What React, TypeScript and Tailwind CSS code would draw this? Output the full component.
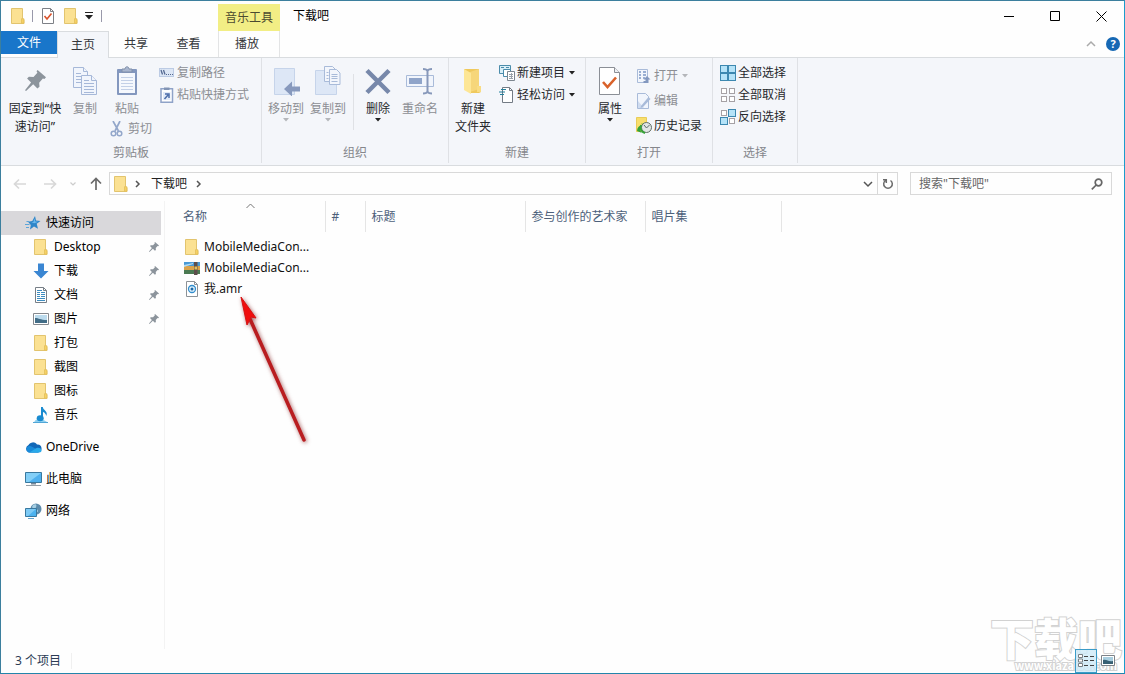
import React from "react";
import type { ReactNode } from "react";

/* ---------- icons ---------- */

function FolderIcon() {
  return (
    <svg width="16" height="16" viewBox="0 0 16 16" className="shrink-0">
      <path d="M1.5.5h11v11h1.500v4h-12.500z" fill="#f8dd84" stroke="#e2c46e" />
      <path d="M2 1h10v10L11 15H2z" fill="#fbe192" />
      <path d="M11.500 15.200v-4.500h2.300v4.500z" fill="#f7d263" stroke="#e2bf5c" strokeWidth="0.800" />
    </svg>
  );
}

function BigFolderIcon() {
  return (
    <svg width="20" height="30" viewBox="0 0 20 30">
      <path d="M1 3h15v18h2v5l-2 1H7z" fill="#efc95d" />
      <path d="M7 6l9-3v20l-9 3z" fill="#f6d67a" />
      <path d="M1 3l7 4v21l-7-4z" fill="#fde695" />
      <path d="M14 20h4v6h-4z" fill="#f9dc83" />
    </svg>
  );
}

function CheckDocIcon({ big = false }: { big?: boolean }) {
  return big ? (
    <svg width="24" height="30" viewBox="0 0 24 30">
      <path d="M1.500 1.500h15l5 5v22h-20z" fill="#fff" stroke="#8b8f96" />
      <path d="M16.500 1.500v5h5" fill="#eef0f3" stroke="#8b8f96" />
      <path d="M5 16l4.500 5L18 11.500" fill="none" stroke="#d9622b" strokeWidth="2.600" />
    </svg>
  ) : (
    <svg width="14" height="16" viewBox="0 0 14 16">
      <path d="M1.500 .5h8l3 3v12h-11z" fill="#fff" stroke="#7d8086" />
      <path d="M9.500 .5v3h3" fill="none" stroke="#7d8086" />
      <path d="M3.500 8l2.500 3 4.500-5.500" fill="none" stroke="#d8532c" strokeWidth="1.600" />
    </svg>
  );
}

function DownTriangle({ color = "#222" }: { color?: string }) {
  return (
    <svg width="6" height="4" viewBox="0 0 6 4" className="shrink-0">
      <path d="M0 0h6L3 3.500z" fill={color} />
    </svg>
  );
}

function PinIcon({ size = 11 }: { size?: number }) {
  return (
    <svg width={size} height={size} viewBox="0 0 20 20" className="shrink-0">
      <path
        d="M12 0l8 7-1.500 1.500-1.500-.4-3.500 4 .3 3.900-2 1.500-4-4L1 20l-1-.8L5.800 12 2 8.200l1.700-1.800 4.400.2 3.700-3.900-.8-1.500z"
        fill="#8c949c"
      />
    </svg>
  );
}

function CopyPagesIcon() {
  return (
    <svg width="26" height="30" viewBox="0 0 26 30" fill="#f1f5fc" stroke="#a6b8d8">
      <path d="M1.500 1.500h10l4 4v16h-14z" />
      <path d="M11.500 1.500v4h4M4 7.500h5M4 10.500h6M4 13.500h6M4 16.500h6" />
      <path d="M9.500 9.500h10l5 5v14h-15z" />
      <path d="M19.500 9.500v5h5M12 14.500h5M12 17.500h10M12 20.500h10M12 23.500h10M12 26.500h10" />
    </svg>
  );
}

function ClipboardIcon() {
  return (
    <svg width="22" height="30" viewBox="0 0 22 30">
      <rect x="1" y="3" width="20" height="26" rx="1" fill="#8397be" />
      <rect x="3" y="7" width="16" height="20" fill="#f5f8fd" />
      <path d="M5 11.500h12M5 14.500h12M5 17.500h12M5 20.500h12M5 23.500h12" stroke="#c3d0e7" />
      <path d="M6 6V3h3c0-3 4-3 4 0h3v3z" fill="#a9b6cf" stroke="#8190aa" />
    </svg>
  );
}

function ScissorsIcon() {
  return (
    <svg width="14" height="16" viewBox="0 0 14 16" fill="none" stroke="#93a7ca">
      <path d="M3 0l5.500 10M10 0L5 10" strokeWidth="1.700" />
      <circle cx="3.500" cy="12.500" r="2.300" strokeWidth="1.500" />
      <circle cx="9.500" cy="12.500" r="2.300" strokeWidth="1.500" />
    </svg>
  );
}

function PathIcon() {
  return (
    <svg width="16" height="16" viewBox="0 0 16 16">
      <rect x=".5" y="3.500" width="14" height="8" fill="#dce6f5" stroke="#bccbe4" />
      <path d="M2 5l1.500 4.500M4.500 5L6 9.500" fill="none" stroke="#566a92" strokeWidth="1.300" />
      <path d="M7 9.500h1M9 9.500h1M11 9.500h1M13 9.500h1" stroke="#566a92" />
    </svg>
  );
}

function ShortcutIcon() {
  return (
    <svg width="16" height="16" viewBox="0 0 16 16">
      <rect x="2" y="1.750" width="11.500" height="13.500" fill="#fff" stroke="#8fa3c8" strokeWidth="1.500" />
      <path d="M5 3h5.500V.5H5z" fill="#8294b4" />
      <rect x="4" y="5" width="7.500" height="8" fill="#e3ebf8" />
      <path d="M5.500 12l3.500-4M6 7h4v4" fill="none" stroke="#4d6ea9" strokeWidth="1.500" />
    </svg>
  );
}

function MoveToIcon() {
  return (
    <svg width="28" height="30" viewBox="0 0 28 30">
      <path d="M2.500 2.500h20v26h-20z" fill="#dde7f6" stroke="#c6d4ea" />
      <path d="M12 23l8-7.500v5h8v5h-8v5z" fill="#8799bd" />
    </svg>
  );
}

function CopyToIcon() {
  return (
    <svg width="28" height="30" viewBox="0 0 28 30" stroke="#a9bbd9">
      <path d="M1.500 4.500h21v24h-21z" fill="#dde7f6" stroke="#c6d4ea" />
      <path d="M10.500.5h8l3 3v12h-11z" fill="#f3f6fc" />
      <path d="M15.500 3.500h7l3.500 3.500v11.500h-10.500z" fill="#f3f6fc" />
      <path d="M17.500 8.500h6M17.500 10.500h6M17.500 12.500h6M17.500 15.500h6M12.500 6.500h2M12.500 9.500h2M12.500 12.500h2" />
    </svg>
  );
}

function DeleteIcon() {
  return (
    <svg width="28" height="30" viewBox="0 0 28 30">
      <path d="M3 4.500l22 22M25 4.500l-22 22" stroke="#7788aa" strokeWidth="4.500" />
    </svg>
  );
}

function RenameIcon() {
  return (
    <svg width="30" height="30" viewBox="0 0 30 30" fill="none">
      <path d="M1.500 9.500h27v11h-27z" fill="#f1f5fc" stroke="#a9bbd9" />
      <path d="M4 12h13v6H4z" fill="#8fa4c9" />
      <path d="M18 3c3 0 4 .5 4.500 2 .500-1.500 1.500-2 4.500-2M22.500 5v21M18 27.500c3 0 4-.5 4.500-2 .500 1.500 1.500 2 4.500 2" stroke="#8798ba" strokeWidth="2" />
    </svg>
  );
}

function NewItemIcon() {
  return (
    <svg width="17" height="16" viewBox="0 0 17 16" stroke="#4b8cab">
      <path d="M.5.5h11v8H.5z" fill="#d9eff8" />
      <path d="M2 2.500h3M7 2.500h3" />
      <path d="M4.500 4.500h7v7h-7z" fill="#fff" />
      <path d="M8.500 6.500h7v9h-7z" fill="#fff" stroke="#7d868f" />
      <path d="M10 9.500h4M10 11.500h4M10 13.500h4M12.500 8v6" stroke="#9aa2aa" />
    </svg>
  );
}

function EasyAccessIcon() {
  return (
    <svg width="16" height="16" viewBox="0 0 16 16">
      <path d="M3.500.5h7l3 3v12h-10z" fill="#fff" stroke="#737b84" />
      <path d="M10.500.5v3h3" fill="none" stroke="#737b84" />
      <path d="M2 2.500h5M0 5h6M1 7.500h4" stroke="#24809b" strokeWidth="1.200" />
    </svg>
  );
}

function OpenIcon() {
  return (
    <svg width="16" height="16" viewBox="0 0 16 16">
      <path d="M1.500 1.500h10v13h-10z" fill="#f2f6fc" stroke="#a9bbd9" />
      <path d="M3 4h2M7 4h3M3 7h2M7 7h3M3 10h2M7 10h2" stroke="#9aafd2" strokeWidth="2" />
      <path d="M11 8l3.500 3.500h-2V15H7.500v-2h2v-1.500h-2z" fill="#8398bf" />
    </svg>
  );
}

function EditIcon() {
  return (
    <svg width="16" height="16" viewBox="0 0 16 16">
      <path d="M1.500.5h8l3 3v12h-11z" fill="#f1f5fc" stroke="#a9bbd9" />
      <path d="M2 15V8l6 7z" fill="#cfdcf0" />
      <path d="M5 13l7.500-9 2 2-7.500 8-2.500 1z" fill="#a9bbd9" />
    </svg>
  );
}

function HistoryIcon() {
  return (
    <svg width="17" height="17" viewBox="0 0 17 17">
      <path d="M.5.5h10v14H.5z" fill="#f8de6c" stroke="#e8cc58" />
      <path d="M1 14c0-3 2-5.500 5-6l-.5-2L10 9l-3.500 4-.5-2c-2 .5-2 3 0 5z" fill="#35a338" />
      <circle cx="10.500" cy="10.500" r="5" fill="#e1e6e6" stroke="#606e66" />
      <path d="M8 8l2.500 3L13.500 8" fill="none" stroke="#5b6869" />
      <path d="M5 8c-1.500 4 1 7.500 4 8" fill="none" stroke="#35a338" strokeWidth="1.800" />
    </svg>
  );
}

function SelectIcon({ filled }: { filled: boolean[] }) {
  const cells = [
    [0.5, 0.5],
    [8.5, 0.5],
    [0.5, 8.5],
    [8.5, 8.5],
  ];
  return (
    <svg width="16" height="16" viewBox="0 0 16 16">
      {cells.map(([x, y], i) => (
        <rect
          key={i}
          x={filled[i] ? x : x + 1}
          y={filled[i] ? y : y + 1}
          width={filled[i] ? 7 : 5}
          height={filled[i] ? 7 : 5}
          fill={filled[i] ? "#b5e3f8" : "#fff"}
          stroke={filled[i] ? "#3c88b0" : "#a5a1a5"}
        />
      ))}
    </svg>
  );
}

function StarIcon() {
  return (
    <svg width="16" height="16" viewBox="0 0 16 16">
      <path d="M10 1l1 4.600 4.500.4-3.800 2.800 1.300 5-4-2.300L5 14.500l.8-4.500L3 6.800l4.300-.8z" fill="#2e86c9" />
      <path d="M1.500 6.500H4M0 9.500h4.500M1 12.500h3" stroke="#5ca5d8" />
      <path d="M9.500 3.500l.8 3 3 .3-4 1.400-3-.7 2-.5z" fill="#69b7eb" />
    </svg>
  );
}

function DownloadIcon() {
  return (
    <svg width="16" height="16" viewBox="0 0 16 16">
      <path d="M5 .5h6V8h4.500L8 15.500.5 8H5z" fill="#3a86d2" />
    </svg>
  );
}

function DocumentIcon() {
  return (
    <svg width="16" height="16" viewBox="0 0 16 16">
      <path d="M2.500.5h8l3 3v12h-11z" fill="#fff" stroke="#777f87" />
      <path d="M10.500.5v3h3" fill="none" stroke="#777f87" />
      <path d="M4 3.500h5M4 5.500h3M8 5.500h4M4 7.500h3M8 7.500h4M4 9.500h3M8 9.500h4M4 11.500h8M4 13.500h8" stroke="#3e8dc0" />
    </svg>
  );
}

function PictureIcon() {
  return (
    <svg width="16" height="16" viewBox="0 0 16 16">
      <path d="M.5 2.500h15v11H.5z" fill="#fff" stroke="#85898e" />
      <path d="M2 4h12v8H2z" fill="#bcdbed" />
      <path d="M2 7c4 0 5 2 12 2v3H2z" fill="#426d87" />
    </svg>
  );
}

function MusicIcon() {
  return (
    <svg width="16" height="16" viewBox="0 0 16 16">
      <path d="M1 15.500c1-3 4-4 7-4l7 4z" fill="#8fd0f0" />
      <path d="M0 15.500h15" stroke="#51a6d6" />
      <ellipse cx="7.200" cy="11.300" rx="3.500" ry="3" fill="#198bd0" />
      <path d="M8 0h1.800c.4 3.500 5.700 4 3.500 9-.5-2-1.500-3.500-3.300-4v7H8z" fill="#198bd0" />
    </svg>
  );
}

function CloudIcon() {
  return (
    <svg width="17" height="16" viewBox="0 0 17 16">
      <path d="M4 13.500a4 4 0 01-.5-7.500A5 5 0 0112 5.500a4 4 0 011 8z" fill="#1268b8" />
      <path d="M3.500 13.500a3.400 3.400 0 01.500-6.500c2-.5 3.500 1 8 3.500l1.500 3z" fill="#198ad9" />
      <path d="M4.500 13.500l7-4.500c3-.8 5 .8 5 2.500 0 1-.8 2-2.500 2z" fill="#29a9e9" />
    </svg>
  );
}

function ComputerIcon() {
  return (
    <svg width="17" height="16" viewBox="0 0 17 16">
      <path d="M.5 1.500h16v10H.5z" fill="#4fb0ee" stroke="#39789e" />
      <path d="M1 2h15L4 11H1z" fill="#83cff7" />
      <path d="M6 12h5v1.500H6z" fill="#789" />
      <path d="M1 14.500h15" stroke="#949da5" />
    </svg>
  );
}

function NetworkIcon() {
  return (
    <svg width="17" height="16" viewBox="0 0 17 16">
      <circle cx="11" cy="6" r="5.500" fill="#5d8bab" />
      <path d="M8 2c3-2 4 0 3 2s2 2 2 4-3 1-4-1-3-2-1-5z" fill="#a6cfe3" />
      <path d="M.5 5.500h11v8H.5z" fill="#4bb2ef" stroke="#39789e" />
      <path d="M1 6h10L3 13H1z" fill="#7dcaf5" />
      <path d="M3 15.500h6" stroke="#62a4cd" />
    </svg>
  );
}

function ArchiveIcon() {
  return (
    <svg width="16" height="16" viewBox="0 0 16 16">
      <path d="M0 2h16v4H0z" fill="#4a9ad6" />
      <path d="M0 6h16v4H0z" fill="#dba24a" />
      <path d="M0 10h16v4H0z" fill="#4b7a52" />
      <path d="M0 5l9-2v1L0 7z" fill="#b7dcef" />
      <path d="M10 2h3.500v13H10z" fill="#5d4e4b" />
      <path d="M10.500 6.500h2.500v3h-2.500z" fill="#e4c25b" />
    </svg>
  );
}

function AudioFileIcon() {
  return (
    <svg width="16" height="16" viewBox="0 0 16 16">
      <path d="M2.500.5h8l3 3v12h-11z" fill="#fff" stroke="#8d9297" />
      <path d="M10.500.5v3h3" fill="none" stroke="#8d9297" />
      <circle cx="8" cy="8" r="3.500" fill="#e5f4fc" stroke="#318dcd" strokeWidth="1.300" />
      <circle cx="8" cy="8" r="1.500" fill="#1b66a5" />
    </svg>
  );
}

function Chevron({ dir, color = "#555" }: { dir: "up" | "down" | "right"; color?: string }) {
  const paths = { up: "M1 6l4-4 4 4", down: "M1 2l4 4 4-4", right: "M3 1l3 3-3 3" };
  return (
    <svg width="10" height="8" viewBox="0 0 10 8" fill="none" stroke={color} strokeWidth="1.500">
      <path d={paths[dir]} />
    </svg>
  );
}

function ArrowGlyph({ d, color }: { d: string; color: string }) {
  return (
    <svg width="14" height="14" viewBox="0 0 14 14" fill="none" stroke={color} strokeWidth="1.700">
      <path d={d} />
    </svg>
  );
}

/* ---------- ribbon pieces ---------- */

function RibbonGroup({ label, width, children }: { label: string; width: string; children: ReactNode }) {
  return (
    <section
      aria-label={label}
      className={`${width} flex shrink-0 flex-col border-r border-[#dfe1e5]`}
    >
      <div className="flex flex-1 items-start">{children}</div>
      <div className="h-[18px] text-center leading-4 text-[#85878c]">{label}</div>
    </section>
  );
}

function TallButton({
  icon,
  lines,
  width,
  disabled = false,
  menu = false,
}: {
  icon: ReactNode;
  lines: string[];
  width: string;
  disabled?: boolean;
  menu?: boolean;
}) {
  return (
    <button
      type="button"
      disabled={disabled}
      className={`${width} flex shrink-0 flex-col items-center pt-2 leading-[18px] whitespace-nowrap ${disabled ? "text-[#8c8e93]" : "text-[#26282c]"}`}
    >
      <span className="flex h-[34px] items-start justify-center">{icon}</span>
      {lines.map((line) => (
        <span key={line}>{line}</span>
      ))}
      {menu && <DownTriangle color={disabled ? "#b4b6ba" : "#222"} />}
    </button>
  );
}

function SmallButton({
  icon,
  label,
  height = "h-[22px]",
  disabled = false,
  menu = false,
}: {
  icon: ReactNode;
  label: string;
  height?: string;
  disabled?: boolean;
  menu?: boolean;
}) {
  return (
    <button
      type="button"
      disabled={disabled}
      className={`${height} flex items-center whitespace-nowrap ${disabled ? "text-[#8c8e93]" : "text-[#26282c]"}`}
    >
      <span className="flex w-[18px] shrink-0">{icon}</span>
      <span className="mr-1">{label}</span>
      {menu && <DownTriangle color={disabled ? "#b4b6ba" : "#222"} />}
    </button>
  );
}

function TitleBar() {
  return (
    <header className="flex h-[30px] shrink-0">
      <div className="flex w-[217px] items-center pl-[9px]">
        <FolderIcon />
        <span className="mr-2 ml-1.5 h-3 w-px bg-[#99a]" />
        <button type="button" aria-label="属性"><CheckDocIcon /></button>
        <button type="button" aria-label="新建文件夹" className="ml-2"><FolderIcon /></button>
        <button type="button" aria-label="自定义快速访问工具栏" className="ml-1.5">
          <svg width="8" height="8" viewBox="0 0 8 8">
            <path d="M0 .5h8" stroke="#222" />
            <path d="M0 3h8L4 7.500z" fill="#222" />
          </svg>
        </button>
        <span className="ml-2 h-3 w-px bg-[#99a]" />
      </div>
      <div className="mt-[3px] flex w-[62px] items-center justify-center bg-[#f2ee85] text-[#4b4a30]">音乐工具</div>
      <h1 className="ml-[13px] flex flex-1 items-center text-black">下载吧</h1>
      <div className="flex">
        <button type="button" aria-label="最小化" className="flex w-[46px] items-center justify-center">
          <svg width="11" height="11" viewBox="0 0 11 11"><path d="M0 5.500h10" stroke="#000" /></svg>
        </button>
        <button type="button" aria-label="最大化" className="flex w-[46px] items-center justify-center">
          <svg width="11" height="11" viewBox="0 0 11 11"><path d="M.5.5h9v9h-9z" fill="none" stroke="#000" /></svg>
        </button>
        <button type="button" aria-label="关闭" className="flex w-[46px] items-center justify-center">
          <svg width="11" height="11" viewBox="0 0 11 11"><path d="M.5.5l10 10M10.500.5l-10 10" stroke="#000" /></svg>
        </button>
      </div>
    </header>
  );
}

function TabRow() {
  return (
    <nav className="flex h-[27px] shrink-0 border-b border-[#d9dcdf] text-[#35373b]">
      <button type="button" className="mb-[3px] w-14 bg-[#1976ca] text-white">文件</button>
      <button type="button" className="-mb-px w-[52px] border border-b-0 border-[#d9dcdf] bg-[#f4f6fa]">主页</button>
      <button type="button" className="w-[54px]">共享</button>
      <button type="button" className="w-[55px] pr-1">查看</button>
      <button type="button" className="w-[62px] border-x border-[#e3e4e5] pr-1">播放</button>
      <span className="flex-1" />
      <button type="button" aria-label="最小化功能区" className="mr-2.5"><Chevron dir="up" color="#aaa" /></button>
      <button type="button" aria-label="帮助" className="mr-1">
        <svg width="14" height="14" viewBox="0 0 14 14">
          <circle cx="7" cy="7" r="7" fill="#1668b4" />
          <text x="7" y="11" textAnchor="middle" fontSize="11" fontWeight="700" fill="#fff">?</text>
        </svg>
      </button>
    </nav>
  );
}

function Ribbon() {
  return (
    <div className="flex h-[108px] shrink-0 border-b border-[#d9dcdf] bg-[#f4f6fa] pb-0.5">
      <div className="flex">
        <RibbonGroup label="剪贴板" width="w-[261px]">
          <TallButton width="w-[68px]" lines={["固定到“快", "速访问”"]} icon={<span className="pt-1"><PinIcon size={21} /></span>} />
          <TallButton width="w-8" lines={["复制"]} disabled icon={<CopyPagesIcon />} />
          <div className="flex w-[52px] flex-col items-center">
            <TallButton width="w-12" lines={["粘贴"]} disabled icon={<ClipboardIcon />} />
            <div className="pl-3"><SmallButton label="剪切" disabled icon={<ScissorsIcon />} /></div>
          </div>
          <div className="flex flex-col items-start pt-1 pl-1.5">
            <SmallButton label="复制路径" disabled icon={<PathIcon />} />
            <SmallButton label="粘贴快捷方式" disabled icon={<ShortcutIcon />} />
          </div>
        </RibbonGroup>
        <RibbonGroup label="组织" width="w-[187px]">
          <div className="flex pl-[3px]">
            <TallButton width="w-[42px]" lines={["移动到"]} disabled menu icon={<MoveToIcon />} />
            <TallButton width="w-[42px]" lines={["复制到"]} disabled menu icon={<CopyToIcon />} />
            <span className="mx-1 mt-4 h-14 w-px bg-[#dfe1e5]" />
            <TallButton width="w-10" lines={["删除"]} menu icon={<DeleteIcon />} />
            <TallButton width="w-11" lines={["重命名"]} disabled icon={<RenameIcon />} />
          </div>
        </RibbonGroup>
        <RibbonGroup label="新建" width="w-[137px]">
          <TallButton width="w-12" lines={["新建", "文件夹"]} icon={<BigFolderIcon />} />
          <div className="flex flex-col pt-1 pl-0.5">
            <SmallButton label="新建项目" menu icon={<NewItemIcon />} />
            <SmallButton label="轻松访问" menu icon={<EasyAccessIcon />} />
          </div>
        </RibbonGroup>
        <RibbonGroup label="打开" width="w-[127px]">
          <TallButton width="w-12" lines={["属性"]} menu icon={<CheckDocIcon big />} />
          <div className="flex flex-col pt-[5px] pl-0.5">
            <SmallButton height="h-[25px]" label="打开" disabled menu icon={<OpenIcon />} />
            <SmallButton height="h-[25px]" label="编辑" disabled icon={<EditIcon />} />
            <SmallButton height="h-[25px]" label="历史记录" icon={<HistoryIcon />} />
          </div>
        </RibbonGroup>
        <RibbonGroup label="选择" width="w-[85px]">
          <div className="flex flex-col pt-1 pl-[7px]">
            <SmallButton label="全部选择" icon={<SelectIcon filled={[true, true, true, true]} />} />
            <SmallButton label="全部取消" icon={<SelectIcon filled={[false, false, false, false]} />} />
            <SmallButton label="反向选择" icon={<SelectIcon filled={[false, true, true, false]} />} />
          </div>
        </RibbonGroup>
      </div>
    </div>
  );
}

function AddressRow() {
  return (
    <div className="flex h-[35px] shrink-0 items-center pr-3">
      <div className="flex w-[108px] items-center pl-3">
        <button type="button" disabled aria-label="后退"><ArrowGlyph color="#d8d8d8" d="M13 7H1.500M6 2.500L1.500 7 6 11.500" /></button>
        <button type="button" disabled aria-label="前进" className="ml-4"><ArrowGlyph color="#d8d8d8" d="M1 7h11.500M8 2.500L12.500 7 8 11.500" /></button>
        <button type="button" disabled aria-label="最近浏览的位置" className="ml-3">
          <svg width="8" height="6" viewBox="0 0 8 6"><path d="M1.500 1.500L4 4l2.500-2.500" fill="none" stroke="#ccc" strokeWidth="1.200" /></svg>
        </button>
        <button type="button" aria-label="上移" className="ml-3"><ArrowGlyph color="#6a6a6a" d="M7 13V1.500M2 6.500l5-5 5 5" /></button>
      </div>
      <div className="flex h-[23px] flex-1 items-center border border-[#d9d9d9] pl-[3px] text-[#222]">
        <FolderIcon />
        <span className="ml-1"><Chevron dir="right" /></span>
        <span className="ml-2">下载吧</span>
        <span className="ml-[7px]"><Chevron dir="right" /></span>
        <span className="flex-1" />
        <button type="button" aria-label="历史地址" className="mr-1"><Chevron dir="down" /></button>
        <button type="button" aria-label="刷新" className="flex h-full w-5 items-center justify-center border-l border-[#d9d9d9]">
          <svg width="12" height="12" viewBox="0 0 12 12" fill="none" stroke="#6a6a6a" strokeWidth="1.500">
            <path d="M8.500 2.500a4.300 4.300 0 11-5 0M1 1.700h3.300V5" />
          </svg>
        </button>
      </div>
      <label className="ml-3 flex h-[23px] w-[202px] items-center border border-[#d9d9d9] pr-2 pl-2">
        <input type="text" aria-label="搜索" placeholder={'搜索"下载吧"'} className="min-w-0 flex-1 bg-transparent outline-none placeholder:text-[#666]" />
        <svg width="12" height="12" viewBox="0 0 12 12" fill="none" stroke="#666" strokeWidth="1.700">
          <circle cx="7.500" cy="4.500" r="3.300" />
          <path d="M5.200 7L.8 11.300" />
        </svg>
      </label>
    </div>
  );
}

/* ---------- body ---------- */

const quickItems: { label: string; icon: ReactNode; pinned?: boolean }[] = [
  { label: "Desktop", icon: <FolderIcon />, pinned: true },
  { label: "下载", icon: <DownloadIcon />, pinned: true },
  { label: "文档", icon: <DocumentIcon />, pinned: true },
  { label: "图片", icon: <PictureIcon />, pinned: true },
  { label: "打包", icon: <FolderIcon /> },
  { label: "截图", icon: <FolderIcon /> },
  { label: "图标", icon: <FolderIcon /> },
  { label: "音乐", icon: <MusicIcon /> },
];

const rootItems = [
  { label: "OneDrive", icon: <CloudIcon /> },
  { label: "此电脑", icon: <ComputerIcon /> },
  { label: "网络", icon: <NetworkIcon /> },
];

function NavigationPane() {
  return (
    <aside className="w-[164px] shrink-0 border-r border-[#f3f3f3] pt-[10px] text-black">
      <a href="#quick" className="mr-[3px] flex h-6 items-center bg-[#d9d8db] pl-6">
        <span className="w-[21px]"><StarIcon /></span>快速访问
      </a>
      <ul>
        {quickItems.map((item) => (
          <li key={item.label}>
            <a href={`#${item.label}`} className="flex h-6 items-center pr-[5px] pl-8">
              <span className="w-[21px]">{item.icon}</span>
              <span className="flex-1">{item.label}</span>
              {item.pinned && <PinIcon size={10} />}
            </a>
          </li>
        ))}
      </ul>
      <ul className="mt-2 flex flex-col gap-2">
        {rootItems.map((item) => (
          <li key={item.label}>
            <a href={`#${item.label}`} className="flex h-6 items-center pl-6">
              <span className="w-[21px]">{item.icon}</span>{item.label}
            </a>
          </li>
        ))}
      </ul>
    </aside>
  );
}

const files = [
  { name: "MobileMediaCon...", icon: <FolderIcon /> },
  { name: "MobileMediaCon...", icon: <ArchiveIcon /> },
  { name: "我.amr", icon: <AudioFileIcon /> },
];

function FileList() {
  return (
    <main className="relative min-w-0 flex-1 pl-[11px]">
      <table className="w-full table-fixed border-collapse text-left">
        <colgroup>
          <col className="w-[149px]" />
          <col className="w-10" />
          <col className="w-40" />
          <col className="w-[120px]" />
          <col className="w-[136px]" />
          <col />
        </colgroup>
        <thead>
          <tr className="h-[31px] text-[#4c607a]">
            <th scope="col" className="relative border-r border-[#e5e5e5] pl-[7px] font-normal">
              名称
              <span className="absolute top-0.5 right-0 left-0 flex justify-center"><svg width="9" height="6" viewBox="0 0 9 6"><path d="M.5 5l4-4 4 4" fill="none" stroke="#777" /></svg></span>
            </th>
            <th scope="col" className="border-r border-[#e5e5e5] pl-1.5 font-normal">#</th>
            <th scope="col" className="border-r border-[#e5e5e5] pl-1.5 font-normal">标题</th>
            <th scope="col" className="border-r border-[#e5e5e5] pl-1.5 font-normal">参与创作的艺术家</th>
            <th scope="col" className="border-r border-[#e5e5e5] pl-1.5 font-normal">唱片集</th>
            <td />
          </tr>
        </thead>
        <tbody className="text-[#111]">
          <tr className="h-1"><td colSpan={6} /></tr>
          {files.map((file, i) => (
            <tr key={i} className="h-[21px]">
              <td className="py-0 pl-2" colSpan={6}>
                <span className="flex items-center gap-1">{file.icon}{file.name}</span>
              </td>
            </tr>
          ))}
        </tbody>
      </table>
      <svg
        width="80"
        height="156"
        viewBox="0 0 80 156"
        className="absolute top-[92px] left-[70px] drop-shadow-[1px_1px_2px_rgba(130,30,30,0.7)]"
      >
        <path d="M15 26L69 147" stroke="#b91d20" strokeWidth="3.500" strokeLinecap="round" />
        <path d="M6 4L21 25l-5-1-4 8z" fill="#f00d0d" stroke="#d61313" />
      </svg>
    </main>
  );
}

function StatusBar() {
  return (
    <footer className="relative flex h-6 shrink-0 items-center justify-between pl-3.5 text-[#2c3c55]">
      <span className="border-r border-[#f0f0f0] pr-2.5">3 个项目</span>
      <div
        aria-hidden="true"
        className="pointer-events-none absolute right-0.5 bottom-0 flex flex-col items-center font-['Noto_Sans_CJK_SC',sans-serif] whitespace-nowrap text-white select-none"
      >
        <span className="-mb-3 text-[44px] leading-[64px] font-black [paint-order:stroke_fill] [-webkit-text-stroke:2px_#d2d2d2]">下载吧</span>
        <span className="pl-5 text-[11px] leading-4 font-bold [paint-order:stroke_fill] [-webkit-text-stroke:2px_#d2d2d2]">www.xiazaiba.com</span>
      </div>
      <div className="relative flex items-center gap-1 pr-2">
        <button type="button" aria-label="详细信息" className="flex h-6 w-[22px] items-center justify-center border border-[#3b9cc9] bg-[#cdeaf7]/80">
          <svg width="17" height="14" viewBox="0 0 17 14">
            <path d="M.5.5h4v3h-4zM.5 5h4v3h-4zM.5 9.500h4v3h-4z" fill="#fff" stroke="#7a8084" />
            <path d="M6 2.500h4M12 2.500h4M6 6.500h4M12 6.500h4M6 11.500h4M12 11.500h4" stroke="#444" />
          </svg>
        </button>
        <button type="button" aria-label="大图标">
          <svg width="15" height="12" viewBox="0 0 15 12">
            <path d="M.5.5h13v10H.5z" fill="#fff" stroke="#7d8388" />
            <path d="M2 2h10v7H2z" fill="#a9cfe0" />
            <path d="M2 5c4-1 5 2 10 1v3H2z" fill="#376073" />
          </svg>
        </button>
      </div>
    </footer>
  );
}

export default function App() {
  return (
    <div className="flex min-h-screen flex-col border border-t-[#3c7f9e] border-r-[#1b9ccc] border-b-[#2385ab] border-l-[#3c7f9e] bg-[#fefefe] font-['Noto_Sans','Noto_Sans_CJK_SC',sans-serif] text-[12px] leading-4">
      <TitleBar />
      <TabRow />
      <Ribbon />
      <AddressRow />
      <div className="flex flex-1">
        <NavigationPane />
        <FileList />
      </div>
      <StatusBar />
    </div>
  );
}
